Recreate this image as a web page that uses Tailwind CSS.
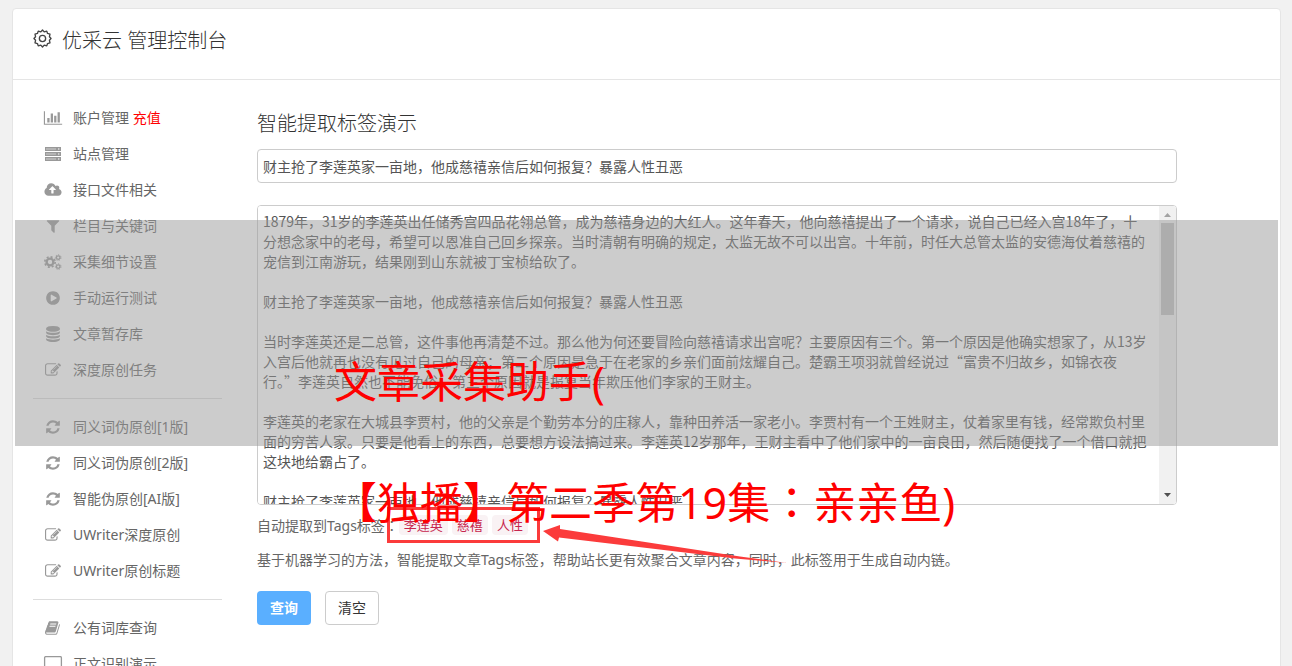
<!DOCTYPE html>
<html lang="zh-CN">
<head>
<meta charset="utf-8">
<meta name="viewport" content="width=device-width, initial-scale=1">
<title>优采云 管理控制台</title>
<script src="https://cdn.jsdelivr.net/npm/@tailwindcss/browser@4"></script>
</head>
<body class="relative h-screen overflow-hidden bg-[#f1f1f1] font-['Noto_Sans','Noto_Sans_CJK_SC',sans-serif] text-sm font-normal text-[#666]">
<svg class="hidden" aria-hidden="true">
  <symbol id="chart" viewBox="0 0 2048 1792"><path d="M640 896v512h-256v-512h256zm384-512v1024h-256v-1024h256zm1024 1152v128h-2048v-1536h128v1408h1920zm-640-896v768h-256v-768h256zm384-384v1152h-256v-1152h256z"/></symbol>
  <symbol id="server" viewBox="0 0 16 16"><path d="M0 1h16v4H0zM0 6h16v4H0zM0 11h16v4H0z"/><path d="M1 2.500h10v1H1zM1 7.500h10v1H1zM1 12.500h10v1H1z" fill="#d0d0d0"/><path d="M13 2.400h1.400v1.200H13zM13 7.400h1.400v1.200H13zM13 12.400h1.400v1.200H13z" fill="#fff"/></symbol>
  <symbol id="cloud" viewBox="0 0 1920 1792"><path d="M1280 864q0-14-9-23l-352-352q-9-9-23-9t-23 9l-351 351q-10 12-10 24 0 14 9 23t23 9h224v352q0 13 9.500 22.500t22.500 9.500h192q13 0 22.500-9.500t9.500-22.500v-352h224q13 0 22.500-9.500t9.500-22.500zm640 288q0 159-112.500 271.500t-271.500 112.500h-1088q-185 0-316.500-131.500t-131.500-316.500q0-130 70-240t188-165q-2-30-2-43 0-212 150-362t362-150q156 0 285.500 87t188.500 231q71-62 166-62 106 0 181 75t75 181q0 76-41 138 130 31 213.500 135.500t83.500 238.500z"/></symbol>
  <symbol id="filter" viewBox="0 0 1792 1792"><path d="M1595 295q17 41-14 70l-493 493v742q0 42-39 59-13 5-25 5-27 0-45-19l-256-256q-19-19-19-45v-486l-493-493q-31-29-14-70 17-39 59-39h1280q42 0 59 39z"/></symbol>
  <symbol id="cogs" viewBox="0 0 18 16"><g fill="none" stroke="currentColor"><circle cx="6" cy="8" r="3.400" stroke-width="2.400"/><circle cx="6" cy="8" r="5.200" stroke-width="1.600" stroke-dasharray="2.040 2.040"/><circle cx="14.200" cy="3.600" r="1.800" stroke-width="1.300"/><circle cx="14.200" cy="3.600" r="2.800" stroke-width="1" stroke-dasharray="1.260 1.260"/><circle cx="14.200" cy="12.600" r="1.800" stroke-width="1.300"/><circle cx="14.200" cy="12.600" r="2.800" stroke-width="1" stroke-dasharray="1.260 1.260"/></g></symbol>
  <symbol id="play" viewBox="0 0 1792 1792"><path d="M896 128q209 0 385.500 103t279.500 279.500 103 385.500-103 385.500-279.500 279.500-385.500 103-385.500-103-279.500-279.500-103-385.500 103-385.500 279.500-279.500 385.500-103zm384 823q32-18 32-55t-32-55l-544-320q-31-19-64-1-32 19-32 56v640q0 37 32 56 16 8 32 8 17 0 32-9z"/></symbol>
  <symbol id="db" viewBox="0 0 1792 1792"><path d="M896 768q237 0 443-43t325-127v170q0 69-103 128t-280 93.500-385 34.500-385-34.500-280-93.500-103-128v-170q119 84 325 127t443 43zm0 768q237 0 443-43t325-127v170q0 69-103 128t-280 93.500-385 34.500-385-34.500-280-93.500-103-128v-170q119 84 325 127t443 43zm0-384q237 0 443-43t325-127v170q0 69-103 128t-280 93.500-385 34.500-385-34.500-280-93.500-103-128v-170q119 84 325 127t443 43zm0-1152q208 0 385 34.500t280 93.500 103 128v128q0 69-103 128t-280 93.500-385 34.500-385-34.500-280-93.500-103-128v-128q0-69 103-128t280-93.500 385-34.500z"/></symbol>
  <symbol id="edit" viewBox="0 0 1792 1792"><path d="M888 1184l116-116-152-152-116 116v56h96v96h56zm440-720q-16-16-33 1l-350 350q-17 17-1 33t33-1l350-350q17-17 1-33zm80 594v190q0 119-84.500 203.500t-203.500 84.500h-832q-119 0-203.500-84.500t-84.500-203.500v-832q0-119 84.500-203.500t203.500-84.500h832q63 0 117 25 15 7 18 23 3 17-9 29l-49 49q-14 14-32 8-23-6-45-6h-832q-66 0-113 47t-47 113v832q0 66 47 113t113 47h832q66 0 113-47t47-113v-126q0-13 9-22l64-64q15-15 35-7t20 29zm-96-738l288 288-672 672h-288v-288zm444 132l-92 92-288-288 92-92q28-28 68-28t68 28l152 152q28 28 28 68t-28 68z"/></symbol>
  <symbol id="refresh" viewBox="0 0 1792 1792"><path d="M1639 1056q0 5-1 7-64 268-268 434.500t-478 166.500q-146 0-282.500-55t-243.500-157l-129 129q-19 19-45 19t-45-19-19-45v-448q0-26 19-45t45-19h448q26 0 45 19t19 45-19 45l-137 137q71 66 161 102t187 36q134 0 250-65t186-179q11-17 53-117 8-23 30-23h192q13 0 22.500 9.500t9.500 22.500zm25-800v448q0 26-19 45t-45 19h-448q-26 0-45-19t-19-45 19-45l138-138q-148-137-349-137-134 0-250 65t-186 179q-11 17-53 117-8 23-30 23h-199q-13 0-22.500-9.500t-9.500-22.500v-7q65-268 270-434.500t480-166.500q146 0 284 55.500t245 156.500l130-129q19-19 45-19t45 19 19 45z"/></symbol>
  <symbol id="book" viewBox="0 0 1792 1792"><path d="M1639 478q40 57 18 129l-275 906q-19 64-76.500 107.500t-122.500 43.500h-923q-77 0-148.500-53.500t-99.500-131.500q-24-67-2-127 0-4 3-27t4-37q1-8-3-21.500t-3-19.500q2-11 8-21t16.500-23.500 16.500-23.500q23-38 45-91.500t30-91.500q3-10 .5-30t-.5-28q3-11 17-28t17-23q21-36 42-92t25-90q1-9-2.500-32t.5-28q4-13 22-30.500t22-22.500q19-26 42.500-84.500t27.500-96.500q1-8-3-25.500t-2-26.500q2-8 9-18t18-23 17-21q8-12 16.500-30.500t15-35 16-36 19.500-32 26.500-23.500 36-11.500 47.500 5.500l-1 3q38-9 51-9h761q74 0 114 56t18 130l-274 906q-36 119-71.500 153.500t-128.500 34.500h-869q-27 0-38 15-11 16-1 43 24 70 144 70h923q29 0 56-15.500t35-41.500l300-987q7-22 5-57 38 15 59 43zm-1064 2q-4 13 2 22.500t20 9.500h608q13 0 25.500-9.500t16.500-22.500l21-64q4-13-2-22.500t-20-9.500h-608q-13 0-25.500 9.500t-16.500 22.500zm-83 256q-4 13 2 22.500t20 9.500h608q13 0 25.500-9.500t16.500-22.500l21-64q4-13-2-22.500t-20-9.500h-608q-13 0-25.500 9.500t-16.500 22.500z"/></symbol>
  <symbol id="laptop" viewBox="0 0 18 16"><rect x=".6" y=".6" width="16.800" height="12" rx="1.200" fill="none" stroke="currentColor" stroke-width="1.300"/><path d="M6 14h6v1.500H6z"/></symbol>
</svg>

<div class="mt-2 mr-[11px] ml-3 min-h-screen rounded-t border border-[#e5e5e5] bg-white">
  <header class="flex h-[71px] items-start gap-[10px] border-b border-[#e5e5e5] pt-4 pl-5 text-[#333]">
    <svg class="mt-1 size-[19px]" viewBox="0 0 20 20" fill="none" stroke="#444" stroke-width="1.400" stroke-linejoin="round" aria-hidden="true"><path d="M10 1l1.800 2 2.700-.8.800 2.500 2.600.8-.6 2.600L19 10l-1.700 1.900.6 2.600-2.600.8-.8 2.500-2.700-.8L10 19l-1.800-2-2.700.8-.8-2.500-2.600-.8.600-2.600L1 10l1.700-1.900-.6-2.600 2.600-.8.800-2.500 2.700.8z"/><circle cx="10" cy="10" r="3.300"/></svg>
    <h1 class="text-xl leading-8 font-light">优采云 管理控制台</h1>
  </header>

  <div class="flex">
    <nav class="w-[209px] shrink-0 pt-5 pl-5" aria-label="管理菜单">
      <ul>
        <li><a href="#" class="flex h-9 items-center gap-[10px] pl-[10px]"><svg class="h-4 w-5 fill-[#999] text-[#999]"><use href="#chart"/></svg><span>账户管理 <span class="text-[#f00]">充值</span></span></a></li>
        <li><a href="#" class="flex h-9 items-center gap-[10px] pl-[10px]"><svg class="h-4 w-5 fill-[#999] text-[#999]"><use href="#server"/></svg>站点管理</a></li>
        <li><a href="#" class="flex h-9 items-center gap-[10px] pl-[10px]"><svg class="h-4 w-5 fill-[#999] text-[#999]"><use href="#cloud"/></svg>接口文件相关</a></li>
        <li><a href="#" class="flex h-9 items-center gap-[10px] pl-[10px]"><svg class="h-4 w-5 fill-[#999] text-[#999]"><use href="#filter"/></svg>栏目与关键词</a></li>
        <li><a href="#" class="flex h-9 items-center gap-[10px] pl-[10px]"><svg class="h-4 w-5 fill-[#999] text-[#999]"><use href="#cogs"/></svg>采集细节设置</a></li>
        <li><a href="#" class="flex h-9 items-center gap-[10px] pl-[10px]"><svg class="h-4 w-5 fill-[#999] text-[#999]"><use href="#play"/></svg>手动运行测试</a></li>
        <li><a href="#" class="flex h-9 items-center gap-[10px] pl-[10px]"><svg class="h-4 w-5 fill-[#999] text-[#999]"><use href="#db"/></svg>文章暂存库</a></li>
        <li><a href="#" class="flex h-9 items-center gap-[10px] pl-[10px]"><svg class="h-4 w-5 fill-[#999] text-[#999]"><use href="#edit"/></svg>深度原创任务</a></li>
      </ul>
      <hr class="my-[10px] border-[#ddd]">
      <ul>
        <li><a href="#" class="flex h-9 items-center gap-[10px] pl-[10px]"><svg class="h-4 w-5 fill-[#999] text-[#999]"><use href="#refresh"/></svg>同义词伪原创[1版]</a></li>
        <li><a href="#" class="flex h-9 items-center gap-[10px] pl-[10px]"><svg class="h-4 w-5 fill-[#999] text-[#999]"><use href="#refresh"/></svg>同义词伪原创[2版]</a></li>
        <li><a href="#" class="flex h-9 items-center gap-[10px] pl-[10px]"><svg class="h-4 w-5 fill-[#999] text-[#999]"><use href="#refresh"/></svg>智能伪原创[AI版]</a></li>
        <li><a href="#" class="flex h-9 items-center gap-[10px] pl-[10px]"><svg class="h-4 w-5 fill-[#999] text-[#999]"><use href="#edit"/></svg>UWriter深度原创</a></li>
        <li><a href="#" class="flex h-9 items-center gap-[10px] pl-[10px]"><svg class="h-4 w-5 fill-[#999] text-[#999]"><use href="#edit"/></svg>UWriter原创标题</a></li>
      </ul>
      <hr class="my-[10px] border-[#ddd]">
      <ul>
        <li><a href="#" class="flex h-9 items-center gap-[10px] pl-[10px]"><svg class="h-4 w-5 fill-[#999] text-[#999]"><use href="#book"/></svg>公有词库查询</a></li>
        <li><a href="#" class="flex h-9 items-center gap-[10px] pl-[10px]"><svg class="h-4 w-5 fill-[#999] text-[#999]"><use href="#laptop"/></svg>正文识别演示</a></li>
      </ul>
    </nav>

    <main class="min-w-0 flex-1 pt-7 pr-[103px] pl-[35px]">
      <h2 class="text-xl leading-8 font-light text-[#333]">智能提取标签演示</h2>
      <form>
        <input type="text" aria-label="标题" value="财主抢了李莲英家一亩地，他成慈禧亲信后如何报复？暴露人性丑恶" class="mt-[9px] block h-[34px] w-full rounded border border-[#ccc] bg-white px-[5px] text-[#555]">
        <div class="relative mt-[22px] h-[300px] overflow-hidden rounded border border-[#ccc]">
          <textarea aria-label="正文" class="block h-full w-full resize-none overflow-hidden bg-white px-[5px] py-[5px] font-['Noto_Sans_CJK_SC',sans-serif] leading-5 whitespace-pre text-[#555]">1879年，31岁的李莲英出任储秀宫四品花翎总管，成为慈禧身边的大红人。这年春天，他向慈禧提出了一个请求，说自己已经入宫18年了，十
分想念家中的老母，希望可以恩准自己回乡探亲。当时清朝有明确的规定，太监无故不可以出宫。十年前，时任大总管太监的安德海仗着慈禧的
宠信到江南游玩，结果刚到山东就被丁宝桢给砍了。

财主抢了李莲英家一亩地，他成慈禧亲信后如何报复？暴露人性丑恶

当时李莲英还是二总管，这件事他再清楚不过。那么他为何还要冒险向慈禧请求出宫呢？主要原因有三个。第一个原因是他确实想家了，从13岁
入宫后他就再也没有见过自己的母亲；第二个原因是急于在老家的乡亲们面前炫耀自己。楚霸王项羽就曾经说过“富贵不归故乡，如锦衣夜
行。”李莲英自然也不能免俗；第三个原因就是报复当年欺压他们李家的王财主。

李莲英的老家在大城县李贾村，他的父亲是个勤劳本分的庄稼人，靠种田养活一家老小。李贾村有一个王姓财主，仗着家里有钱，经常欺负村里
面的穷苦人家。只要是他看上的东西，总要想方设法搞过来。李莲英12岁那年，王财主看中了他们家中的一亩良田，然后随便找了一个借口就把
这块地给霸占了。

财主抢了李莲英家一亩地，他成慈禧亲信后如何报复？暴露人性丑恶</textarea>
          <div class="absolute inset-y-0 right-0 flex w-[17px] flex-col items-center bg-[#f1f1f1]" aria-hidden="true">
            <svg class="h-[17px] w-[17px] shrink-0"><path d="M5 11h7L8.500 7z" fill="#a3a3a3"/></svg>
            <div class="h-[92px] w-[13px] bg-[#c1c1c1]"></div>
            <svg class="mt-auto h-[17px] w-[17px] shrink-0"><path d="M5 6h7l-3.500 4z" fill="#505050"/></svg>
          </div>
        </div>
        <div class="mt-[10px] flex h-5 items-center whitespace-nowrap">
          <p>自动提取到Tags标签<span lang="zh-TW" class="font-['Noto_Sans_CJK_TC',sans-serif]">：</span></p>
          <div class="flex gap-1 font-['Noto_Sans_CJK_SC',sans-serif]">
            <code class="rounded bg-[#f9f2f4] px-[5px] font-[inherit] text-[13px] leading-5 text-[#c7254e]">李莲英</code>
            <code class="rounded bg-[#f9f2f4] px-[5px] font-[inherit] text-[13px] leading-5 text-[#c7254e]">慈禧</code>
            <code class="rounded bg-[#f9f2f4] px-[5px] font-[inherit] text-[13px] leading-5 text-[#c7254e]">人性</code>
          </div>
        </div>
        <p class="mt-[15px] leading-5 whitespace-nowrap">基于机器学习的方法，智能提取文章Tags标签，帮助站长更有效聚合文章内容，同时，此标签用于生成自动内链。</p>
        <div class="mt-[21px] flex gap-[14px]">
          <button type="button" class="h-[34px] w-[54px] rounded bg-[#5aafff] font-bold text-white">查询</button>
          <button type="button" class="h-[34px] w-[54px] rounded border border-[#ccc] bg-white text-[#333]">清空</button>
        </div>
      </form>
    </main>
  </div>
</div>

<!-- Annotation around the extracted tags -->
<div class="absolute top-[507px] left-[387px] h-9 w-[153px] border-3 border-[#fb3b3b]"></div>
<svg class="absolute top-[520px] left-[540px] h-12 w-[250px]" viewBox="0 0 250 48" aria-hidden="true"><path d="M3 11l17-6v4L200 36.500 247 43 195 38.500 19 17.500l-1 4z" fill="#fb3b3b"/></svg>

<!-- Caption band -->
<div class="absolute top-[220px] right-[14px] left-[15px] h-[226px] bg-[#999]/50"></div>
<p class="absolute top-[322px] left-[334px] text-[43px] leading-[119px] font-normal whitespace-nowrap text-[#f00]">文章采集助手(<br>【独播】第二季第19集<span lang="zh-TW" class="font-['Noto_Sans_CJK_TC',sans-serif]">：</span>亲亲鱼)</p>
</body>
</html>
